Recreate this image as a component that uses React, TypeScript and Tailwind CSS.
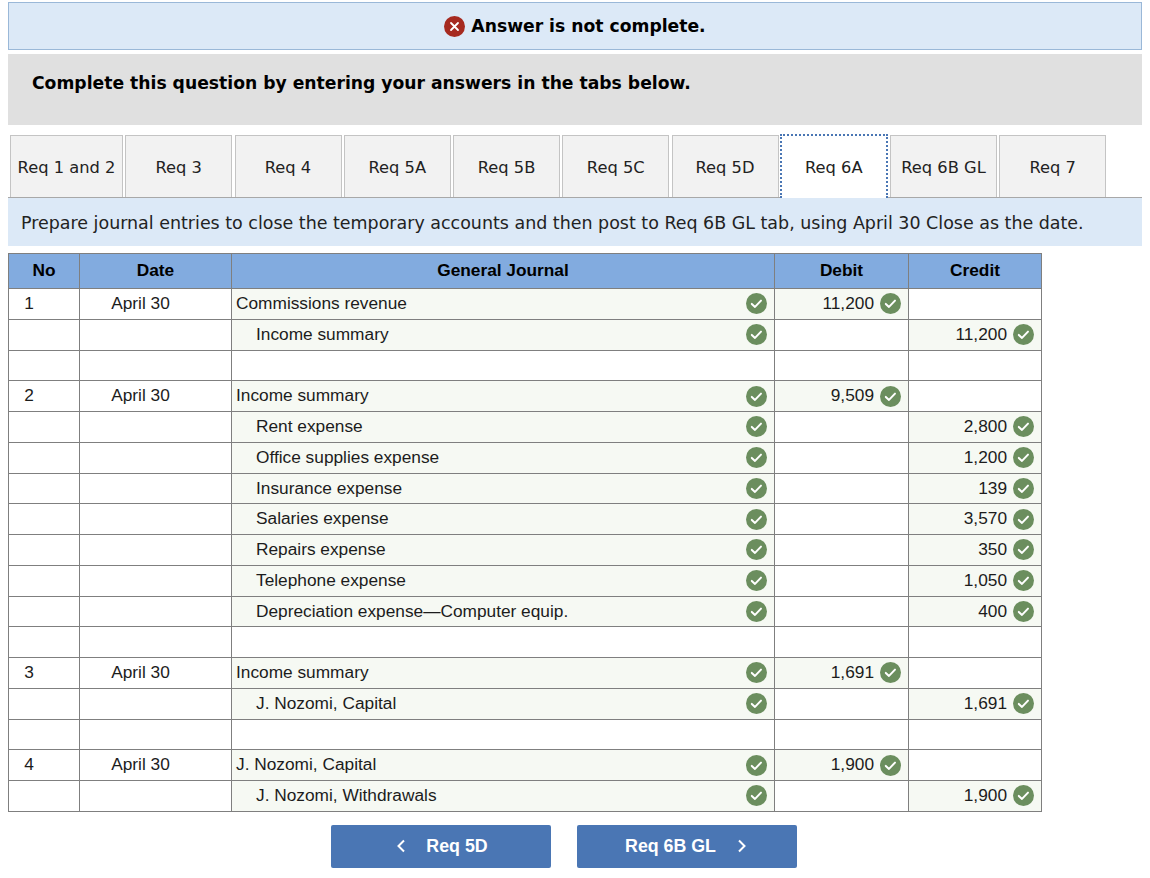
const tabs = ["Req 1 and 2", "Req 3", "Req 4", "Req 5A", "Req 5B", "Req 5C", "Req 5D", "Req 6A", "Req 6B GL", "Req 7"];

type Row = { no?: string, date?: string, account?: string, indent?: boolean, debit?: string, credit?: string };

const rows: Row[] = [
    { no: "1", date: "April 30", account: "Commissions revenue", debit: "11,200" },
    { account: "Income summary", indent: true, credit: "11,200" },
    {},
    { no: "2", date: "April 30", account: "Income summary", debit: "9,509" },
    { account: "Rent expense", indent: true, credit: "2,800" },
    { account: "Office supplies expense", indent: true, credit: "1,200" },
    { account: "Insurance expense", indent: true, credit: "139" },
    { account: "Salaries expense", indent: true, credit: "3,570" },
    { account: "Repairs expense", indent: true, credit: "350" },
    { account: "Telephone expense", indent: true, credit: "1,050" },
    { account: "Depreciation expense—Computer equip.", indent: true, credit: "400" },
    {},
    { no: "3", date: "April 30", account: "Income summary", debit: "1,691" },
    { account: "J. Nozomi, Capital", indent: true, credit: "1,691" },
    {},
    { no: "4", date: "April 30", account: "J. Nozomi, Capital", debit: "1,900" },
    { account: "J. Nozomi, Withdrawals", indent: true, credit: "1,900" },
];

function Check() {
    return (
        <svg width="21" height="21" viewBox="0 0 21 21" className="shrink-0">
            <circle cx="10.5" cy="10.5" r="10.5" fill="#6b8e5e" />
            <path d="M5.8 10.9 L9 13.9 L15 7.6" fill="none" stroke="#fff" strokeWidth="2" strokeLinecap="round" strokeLinejoin="round" />
        </svg>
    );
}

function ErrorIcon() {
    return (
        <svg width="21" height="21" viewBox="0 0 21 21" className="shrink-0">
            <circle cx="10.5" cy="10.5" r="10.5" fill="#a62a20" />
            <path d="M7 7 L14 14 M14 7 L7 14" fill="none" stroke="#fff" strokeWidth="1.8" strokeLinecap="round" />
        </svg>
    );
}

function Amount({ value }: { value?: string }) {
    return (
        <td className={`border border-[#7f7f7f] p-0 ${value ? "bg-[#f6f9f3]" : ""}`}>
            {value && (
                <div className="flex items-center justify-end gap-[6px] pr-[7px]">
                    <span>{value}</span>
                    <Check />
                </div>
            )}
        </td>
    );
}

export default function App() {
    return (
        <div className="w-[1150px] h-[878px] px-2 pt-[2px] bg-white text-[#222] font-['DejaVu_Sans',sans-serif] overflow-hidden">
            <div className="h-12 flex items-center justify-center gap-[6px] bg-[#dce9f7] border border-[#9ab8d8]">
                <ErrorIcon />
                <span className="pt-[2px] text-[17.2px] font-bold text-black">Answer is not complete.</span>
            </div>

            <div className="mt-1 h-[71px] pl-6 pt-[17px] bg-[#e0e0e0]">
                <p className="text-[17.2px] leading-6 font-bold text-black">Complete this question by entering your answers in the tabs below.</p>
            </div>

            <div className="mt-[10px] h-[63px] pl-[2px] flex items-start gap-[2.25px] border-b border-[#a8a8a8]">
                {tabs.map(tab => tab === "Req 6A" ? (
                    <div key={tab} className="relative z-10 -mt-[1px] -ml-[1px] w-[108px] h-[64px] shrink-0 flex items-center justify-center pt-[2px] bg-white border-2 border-b-0 border-dotted border-[#4a76b4] text-[16.3px]">
                        {tab}
                    </div>
                ) : (
                    <div key={tab} className={`h-[62px] shrink-0 flex items-center justify-center pt-1 bg-[#f2f2f2] border border-b-0 border-[#c4c4c4] text-[16.3px] ${tab === "Req 1 and 2" ? "w-[113px]" : "w-[107px]"}`}>
                        {tab}
                    </div>
                ))}
            </div>

            <div className="h-12 flex items-center pl-[13px] pt-[3px] bg-[#dce9f7] text-[17.47px]">
                Prepare journal entries to close the temporary accounts and then post to Req 6B GL tab, using April 30 Close as the date.
            </div>

            <table className="mt-[7px] w-[1033px] table-fixed border-collapse font-['Liberation_Sans',sans-serif] text-[17.3px] text-[#1c1c1c]">
                <colgroup>
                    <col className="w-[71px]" />
                    <col className="w-[152px]" />
                    <col className="w-[543px]" />
                    <col className="w-[134px]" />
                    <col className="w-[133px]" />
                </colgroup>
                <thead>
                    <tr className="h-[35.1px] bg-[#82abdf] text-[17.3px] text-black">
                        {["No", "Date", "General Journal", "Debit", "Credit"].map(h => (
                            <th key={h} className="border border-[#7f7f7f] p-0 font-bold text-center">{h}</th>
                        ))}
                    </tr>
                </thead>
                <tbody>
                    {rows.map((row, i) => (
                        <tr key={i} className="h-[30.75px]">
                            <td className="border border-[#7f7f7f] p-0 pr-[30px] text-center">{row.no}</td>
                            <td className="border border-[#7f7f7f] p-0 pr-[30px] text-center">{row.date}</td>
                            <td className={`border border-[#7f7f7f] p-0 ${row.account ? "bg-[#f6f9f3]" : ""}`}>
                                {row.account && (
                                    <div className={`flex items-center justify-between pr-[7px] ${row.indent ? "pl-6" : "pl-1"}`}>
                                        <span>{row.account}</span>
                                        <Check />
                                    </div>
                                )}
                            </td>
                            <Amount value={row.debit} />
                            <Amount value={row.credit} />
                        </tr>
                    ))}
                </tbody>
            </table>

            <div className="mt-[13px] flex gap-[26px] pl-[323px] font-['Liberation_Sans',sans-serif]">
                <button className="w-[220px] h-[43px] pl-[2px] flex items-center justify-center bg-[#4a76b4] rounded-[2px] text-white text-[17.8px] font-bold">
                    <svg width="10" height="14" viewBox="0 0 10 14" className="mr-[20px]"><path d="M8 1.5 L2.5 7 L8 12.5" fill="none" stroke="#fff" strokeWidth="2" /></svg>
                    Req 5D
                </button>
                <button className="w-[220px] h-[43px] pr-[2px] flex items-center justify-center bg-[#4a76b4] rounded-[2px] text-white text-[17.8px] font-bold">
                    Req 6B GL
                    <svg width="10" height="14" viewBox="0 0 10 14" className="ml-[21px]"><path d="M2 1.5 L7.5 7 L2 12.5" fill="none" stroke="#fff" strokeWidth="2" /></svg>
                </button>
            </div>
        </div>
    );
}
